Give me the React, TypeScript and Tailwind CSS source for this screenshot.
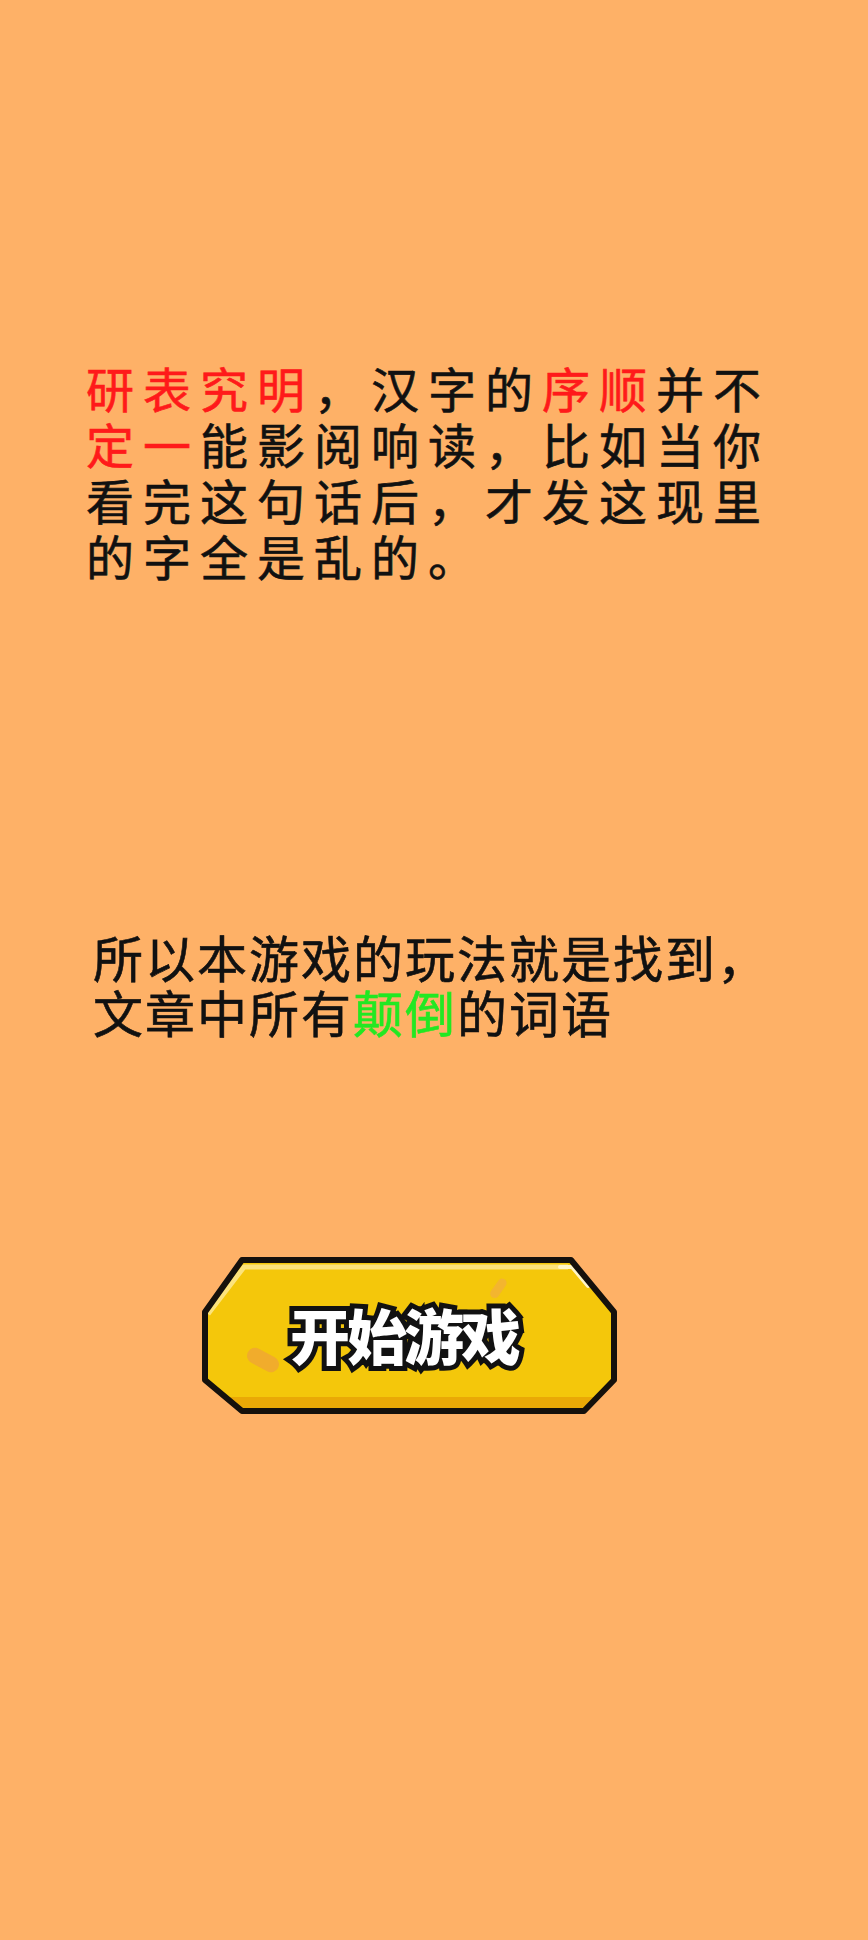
const cjk = "font-['Noto_Sans_CJK_SC','Noto_Sans',sans-serif]";

function StartButton() {
  const shape = "M42,4 L371,4 L414,56 L414,124 L384,155 L42,155 L5,124 L5,56 Z";
  return (
    <button className="relative ml-[200px] block h-[160px] w-[420px]">
      <svg
        className="absolute inset-0"
        width="420"
        height="160"
        viewBox="0 0 420 160"
      >
        <defs>
          <clipPath id="face">
            <path d={shape} />
          </clipPath>
        </defs>
        <path d={shape} fill="#f4c70b" />
        <g clipPath="url(#face)">
          <rect x="0" y="141" width="420" height="20" fill="#eaa906" />
          <path
            d="M8,58 L44,11 L368,11"
            fill="none"
            stroke="#fce37c"
            strokeWidth="5"
            strokeLinejoin="round"
          />
          <path
            d="M360,11 L372,11 L388,30"
            fill="none"
            stroke="#fff6c8"
            strokeWidth="4"
            strokeLinecap="round"
          />
          <rect
            x="46"
            y="96"
            width="34"
            height="16"
            rx="8"
            fill="#f0a733"
            opacity="0.85"
            transform="rotate(28 63 104)"
          />
          <rect
            x="287"
            y="28"
            width="22"
            height="9"
            rx="4.5"
            fill="#f2b038"
            opacity="0.8"
            transform="rotate(-55 298 32)"
          />
        </g>
        <path
          d={shape}
          fill="none"
          stroke="#15110c"
          strokeWidth="6"
          strokeLinejoin="round"
        />
      </svg>
      <span
        className={`relative flex h-full items-center justify-center pb-[4px] pr-[12px] text-[60px] font-black leading-none tracking-[-3px] text-white [-webkit-text-stroke:10px_#111] [paint-order:stroke_fill] ${cjk}`}
      >
        开始游戏
      </span>
    </button>
  );
}

export default function App() {
  return (
    <div className={`min-h-[1940px] w-full bg-[#feb167] pt-[359px] text-[#111] ${cjk}`}>
      <p className="ml-[86px] w-[700px] text-[48px] leading-[56px] tracking-[9px] [-webkit-text-stroke:0.6px_currentColor]">
        <span className="text-[#ff1a1a]">研表究明</span>，汉字的
        <span className="text-[#ff1a1a]">序顺</span>并不
        <span className="text-[#ff1a1a]">定一</span>
        能影阅响读，比如当你看完这句话后，才发这现里的字全是乱的。
      </p>

      <p className="ml-[93px] mt-[346px] w-[700px] text-[50px] leading-[55px] tracking-[2px] [-webkit-text-stroke:0.6px_currentColor]">
        所以本游戏的玩法就是找到，文章中所有
        <span className="text-[#22e822]">颠倒</span>的词语
      </p>

      <div className="mt-[217px]">
        <StartButton />
      </div>
    </div>
  );
}
